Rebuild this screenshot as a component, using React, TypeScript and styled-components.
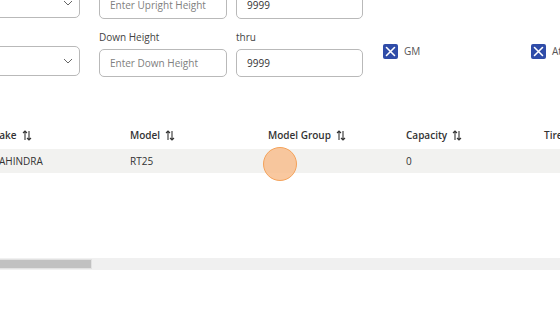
import React from "react";
import styled, { createGlobalStyle } from "styled-components";

const GlobalStyle = createGlobalStyle`
  html, body {
    margin: 0;
    padding: 0;
    background: #ffffff;
    overflow: hidden;
    font-family: "Open Sans", "Noto Sans", sans-serif;
    color: #333333;
  }
`

const Page = styled.div`
  position: relative;
  width: 560px;
  height: 315px;
  overflow: hidden;
`

const Form = styled.div`
  display: flex;
  flex-direction: column;
  gap: 11px;
  margin-top: -28px;
  margin-left: -60px;
`

const FormRow = styled.div`
  display: grid;
  grid-template-columns: 159px 137px 147px 148px 148px;
  align-items: start;
`

const Field = styled.div`
  display: flex;
  flex-direction: column;
`

const Label = styled.label`
  height: 14px;
  line-height: 14px;
  font-size: 10px;
  color: #444;
  margin-bottom: 5px;
`

type BoxProps = { width: number }
const SelectBox = styled.div<BoxProps>`
  box-sizing: border-box;
  width: ${props => props.width}px;
  height: 30px;
  margin-top: -3px;
  border: 1px solid #b9b9b9;
  border-radius: 5px;
  display: flex;
  align-items: center;
  justify-content: flex-end;
  padding-right: 6px;
`

const Input = styled.div<BoxProps>`
  box-sizing: border-box;
  width: ${props => props.width}px;
  height: 28px;
  border: 1px solid #b9b9b9;
  border-radius: 5px;
  display: flex;
  align-items: center;
  padding-left: 10px;
  font-size: 10px;
`

const Placeholder = styled.span`
  color: #808080;
`

const Value = styled.span`
  color: #333;
`

const CheckCell = styled.div`
  display: flex;
  align-items: center;
  gap: 6px;
  padding-top: 13px;
  font-size: 10px;
  line-height: 16px;
  color: #555;
`

const CheckBox = styled.div`
  width: 15px;
  height: 15px;
  background: #2f4ca8;
  border-radius: 2px;
  display: grid;
  place-items: center;
`

const Table = styled.div`
  margin-top: 44px;
  margin-left: -18px;
  display: flex;
  flex-direction: column;
  min-height: 137px;
`

type RowProps = { head?: boolean }
const Row = styled.div<RowProps>`
  display: grid;
  grid-template-columns: 140px repeat(4, 138px);
  height: ${props => props.head ? 28 : 24}px;
  align-items: center;
  background: ${props => props.head ? "transparent" : "#f2f2f0"};
  font-size: 10px;
  font-weight: ${props => props.head ? 600 : 400};
  color: #333;
`

const Cell = styled.div`
  padding-left: 8px;
  display: flex;
  align-items: center;
  gap: 5px;
  white-space: nowrap;
`

const ScrollTrack = styled.div`
  height: 12px;
  background: #f0f0f0;
  display: flex;
  align-items: center;
`

const ScrollThumb = styled.div`
  height: 10px;
  background: #c1c1c1;
  border: 1px solid #e2e2e2;
  border-left: none;
  box-sizing: border-box;
`

const Cursor = styled.div`
  position: absolute;
  left: 263px;
  top: 147px;
  width: 34px;
  height: 34px;
  box-sizing: border-box;
  border-radius: 50%;
  background: rgba(248, 190, 142, 0.85);
  border: 1.5px solid #f4a25a;
`

const Chevron = () => (
  <svg width="10" height="6" viewBox="0 0 10 6">
    <path d="M1 1l4 4 4-4" fill="none" stroke="#666" strokeWidth="1" />
  </svg>
)

const Cross = () => (
  <svg width="11" height="11" viewBox="0 0 11 11">
    <path d="M1.5 1.5l8 8M9.5 1.5l-8 8" stroke="#fff" strokeWidth="1.6" strokeLinecap="round" />
  </svg>
)

const SortIcon = () => (
  <svg width="10" height="11" viewBox="0 0 10 11">
    <path d="M3 10V1M1 3l2-2 2 2M7 1v9M5 8l2 2 2-2" fill="none" stroke="#333" strokeWidth="1.1" />
  </svg>
)

const columns = ["Make", "Model", "Model Group", "Capacity", "Tire"]
const rows = [["MAHINDRA", "RT25", "", "0", ""]]

const fieldRows = [
  { label: "Upright Height", placeholder: "Enter Upright Height", check: ["", ""] },
  { label: "Down Height", placeholder: "Enter Down Height", check: ["GM", "Atlas"] },
]

export default function App() {
  const thumbWidth = 92

  return <>
    <GlobalStyle />
    <Page>
      <Form>
        {fieldRows.map((r, idx) => (
          <FormRow key={idx}>
            <Field>
              <Label />
              <SelectBox width={140}><Chevron /></SelectBox>
            </Field>
            <Field>
              <Label>{r.label}</Label>
              <Input width={128}><Placeholder>{r.placeholder}</Placeholder></Input>
            </Field>
            <Field>
              <Label>thru</Label>
              <Input width={127}><Value>9999</Value></Input>
            </Field>
            {r.check.map((c, i) => (
              <CheckCell key={i}>
                <CheckBox><Cross /></CheckBox>
                <span>{c}</span>
              </CheckCell>
            ))}
          </FormRow>
        ))}
      </Form>
      <Table>
        <Row head>
          {columns.map(c => <Cell key={c}>{c}<SortIcon /></Cell>)}
        </Row>
        {rows.map((r, idx) => (
          <Row key={idx}>
            {r.map((v, i) => <Cell key={i}>{v}</Cell>)}
          </Row>
        ))}
      </Table>
      <ScrollTrack>
        <ScrollThumb style={{ width: thumbWidth }} />
      </ScrollTrack>
      <Cursor />
    </Page>
  </>
}
